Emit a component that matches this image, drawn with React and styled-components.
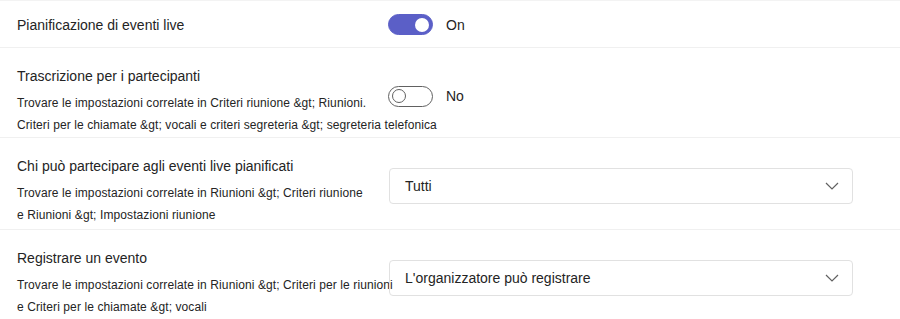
import styled, { createGlobalStyle } from 'styled-components'

const GlobalStyle = createGlobalStyle`
	body {
		margin: 0;
		background: #ffffff;
		font-family: "Liberation Sans", Arial, sans-serif;
		color: #242424;
	}
`

const Page = styled.div`
	width: 900px;
	padding-top: 1px;
	border-top: 1px solid #f3f3f3;
`

const Row = styled.div`
	display: flex;
	align-items: ${(props) => (props.compact ? 'center' : 'flex-start')};
	height: ${(props) => props.height}px;
	border-bottom: 1px solid #f0f0f0;
	box-sizing: border-box;
`

const TextCol = styled.div`
	width: 388px;
	flex-shrink: 0;
	padding-left: 17px;
	box-sizing: border-box;
	padding-top: ${(props) => (props.compact ? 0 : 18)}px;
	white-space: nowrap;
`

const Title = styled.div`
	font-size: 14px;
	line-height: 20px;
	margin-bottom: ${(props) => (props.compact ? 0 : 6)}px;
`

const Hint = styled.div`
	font-size: 12px;
	line-height: 22px;
	letter-spacing: 0.1px;
`

const ControlCol = styled.div`
	display: flex;
	align-items: center;
	height: 36px;
	margin-top: ${(props) => (props.compact ? 0 : 30)}px;
`

const Track = styled.div`
	width: 45px;
	height: 21px;
	border-radius: 11px;
	box-sizing: border-box;
	display: flex;
	align-items: center;
	padding: 0 3px;
	justify-content: ${(props) => (props.on ? 'flex-end' : 'flex-start')};
	background: ${(props) => (props.on ? '#5b5fc7' : '#ffffff')};
	border: 1px solid ${(props) => (props.on ? '#5b5fc7' : '#616161')};
`

const Knob = styled.div`
	width: 14px;
	height: 14px;
	border-radius: 50%;
	box-sizing: border-box;
	background: #ffffff;
	border: ${(props) => (props.on ? 'none' : '1.5px solid #616161')};
`

const ToggleLabel = styled.span`
	font-size: 14px;
	margin-left: 13px;
	color: #242424;
`

const Select = styled.div`
	width: 464px;
	height: 36px;
	margin-left: 1px;
	box-sizing: border-box;
	border: 1px solid #e1e1e1;
	border-radius: 4px;
	display: flex;
	align-items: center;
	justify-content: space-between;
	padding: 0 13px 0 15px;
	font-size: 14px;
	color: #242424;
`

function Toggle({ on }) {
	return (
		<ControlCol compact={on}>
			<Track on={on}>
				<Knob on={on} />
			</Track>
			<ToggleLabel>{on ? 'On' : 'No'}</ToggleLabel>
		</ControlCol>
	)
}

function Dropdown({ value }) {
	return (
		<ControlCol>
			<Select>
				<span>{value}</span>
				<svg width="14" height="8" viewBox="0 0 14 8" fill="none">
					<path d="M1 1l6 6 6-6" stroke="#616161" strokeWidth="1.2" />
				</svg>
			</Select>
		</ControlCol>
	)
}

function App() {
	return (
		<>
			<GlobalStyle />
			<Page>
				<Row compact height={46}>
					<TextCol compact>
						<Title compact>Pianificazione di eventi live</Title>
					</TextCol>
					<Toggle on />
				</Row>
				<Row height={90}>
					<TextCol>
						<Title>Trascrizione per i partecipanti</Title>
						<Hint>Trovare le impostazioni correlate in Criteri riunione &amp;gt; Riunioni.</Hint>
						<Hint>Criteri per le chiamate &amp;gt; vocali e criteri segreteria &amp;gt; segreteria telefonica</Hint>
					</TextCol>
					<Toggle on={false} />
				</Row>
				<Row height={92}>
					<TextCol>
						<Title>Chi può partecipare agli eventi live pianificati</Title>
						<Hint>Trovare le impostazioni correlate in Riunioni &amp;gt; Criteri riunione</Hint>
						<Hint>e Riunioni &amp;gt; Impostazioni riunione</Hint>
					</TextCol>
					<Dropdown value="Tutti" />
				</Row>
				<Row height={92}>
					<TextCol>
						<Title>Registrare un evento</Title>
						<Hint>Trovare le impostazioni correlate in Riunioni &amp;gt; Criteri per le riunioni</Hint>
						<Hint>e Criteri per le chiamate &amp;gt; vocali</Hint>
					</TextCol>
					<Dropdown value="L'organizzatore può registrare" />
				</Row>
			</Page>
		</>
	)
}

export default App
